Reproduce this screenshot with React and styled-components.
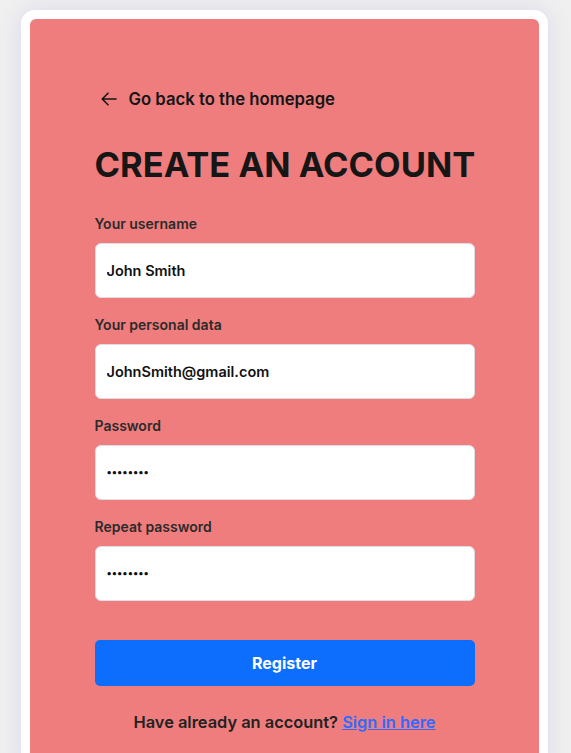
import React from "react";
import styled, { createGlobalStyle } from "styled-components";

const GlobalStyle = createGlobalStyle`
  html, body {
    margin: 0;
    padding: 0;
    background: #f0f0f0;
    font-family: "Inter", "Lato", sans-serif;
    color: #1e1e1e;
  }
`;

const Card = styled.div`
  width: 527px;
  margin: 10px 0 0 21px;
  box-sizing: border-box;
  padding: 9px 9px 0 9px;
  background: #ffffff;
  border-radius: 14px 14px 0 0;
  box-shadow: 0 0 22px rgba(110, 110, 210, 0.18);
`;

const Panel = styled.div`
  background: #f07d7d;
  border-radius: 6px 6px 0 0;
  padding: 70px 0 40px 0;
  display: flex;
  justify-content: center;
`;

const Form = styled.form`
  width: 380px;
  display: flex;
  flex-direction: column;
`;

const BackLink = styled.a`
  display: flex;
  align-items: center;
  gap: 12px;
  margin-left: 6px;
  font-size: 16.7px;
  font-weight: 600;
  color: #151515;
  text-decoration: none;
  cursor: pointer;
`;

const Title = styled.h1`
  margin: 36px 0 30px 0;
  font-size: 34.5px;
  line-height: 40px;
  font-weight: 700;
  color: #161616;
  white-space: nowrap;
`;

const Field = styled.div`
  display: flex;
  flex-direction: column;
  margin-bottom: 18px;
`;

const Label = styled.label`
  font-size: 14px;
  line-height: 17px;
  font-weight: 600;
  color: #2b2b2b;
  margin-bottom: 11px;
`;

const Input = styled.input`
  box-sizing: border-box;
  height: 55px;
  width: 100%;
  padding: 0 11px;
  border: 1px solid #dedde6;
  border-radius: 6px;
  background: #ffffff;
  font-family: inherit;
  font-size: ${(p) => (p.type === "password" ? "10.5px" : "14.5px")};
  font-weight: 600;
  color: #111;
  outline: none;
`;

const Button = styled.button`
  margin-top: 21px;
  height: 46px;
  border: none;
  border-radius: 5px;
  background: #0d6efd;
  color: #ffffff;
  font-family: inherit;
  font-size: 16px;
  font-weight: 700;
  cursor: pointer;
`;

const Footer = styled.p`
  margin: 26px 0 0 0;
  text-align: center;
  font-size: 16.4px;
  font-weight: 600;
  color: #222;
`;

const SignIn = styled.a`
  color: #2f6bff;
  text-decoration: underline;
`;

function ArrowLeft() {
  return (
    <svg width="16" height="14" viewBox="0 0 16 14" fill="none">
      <path
        d="M15 7H1.5M7 1.2L1.2 7L7 12.8"
        stroke="#151515"
        strokeWidth="1.6"
        strokeLinecap="round"
        strokeLinejoin="round"
      />
    </svg>
  );
}

const fields = [
  { label: "Your username", type: "text", value: "John Smith" },
  { label: "Your personal data", type: "text", value: "JohnSmith@gmail.com" },
  { label: "Password", type: "password", value: "password" },
  { label: "Repeat password", type: "password", value: "password" },
];

export default function App() {
  return (
    <>
      <GlobalStyle />
      <Card>
        <Panel>
          <Form onSubmit={(e) => e.preventDefault()}>
            <BackLink>
              <ArrowLeft />
              Go back to the homepage
            </BackLink>
            <Title>CREATE AN ACCOUNT</Title>
            {fields.map((f) => (
              <Field key={f.label}>
                <Label>{f.label}</Label>
                <Input type={f.type} defaultValue={f.value} readOnly />
              </Field>
            ))}
            <Button type="submit">Register</Button>
            <Footer>
              Have already an account? <SignIn href="#">Sign in here</SignIn>
            </Footer>
          </Form>
        </Panel>
      </Card>
    </>
  );
}
